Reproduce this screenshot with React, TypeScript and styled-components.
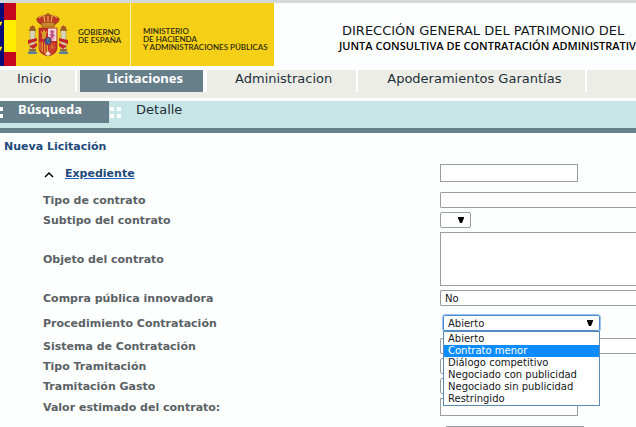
import React, { useState } from "react";
import styled, { createGlobalStyle, css } from "styled-components";

const GlobalStyle = createGlobalStyle`
  * { box-sizing: border-box; }
  body {
    margin: 0;
    background: #fdfefe;
    font-family: "DejaVu Sans", Verdana, sans-serif;
    color: #1f2f38;
    overflow-x: hidden;
  }
`;

const Header = styled.header`
  display: flex;
  align-items: stretch;
  height: 66px;
  border-top: 3px solid #d3d8da;
  margin-bottom: 4px;
`;

const Brand = styled.div`
  flex: none;
  display: flex;
  width: 274px;
  background: #f5d017;
  color: #2c2a10;
  font: 600 8px/8px Lato, sans-serif;
`;

const Government = styled.div`
  flex: none;
  display: flex;
  align-items: center;
  width: 131px;
  border-right: 1px solid #fdf4c0;
`;

const Flag = styled.svg`
  flex: none;
  width: 16px;
  height: 63px;
`;

const Crest = styled.svg`
  flex: none;
  width: 42px;
  height: 44px;
  margin: 0 9px 0 11px;
`;

const Ministry = styled.div`
  display: flex;
  align-items: center;
  padding: 8px 0 0 12px;
  white-space: nowrap;
`;

const GovernmentName = styled.span`
  padding-top: 2px;
  white-space: nowrap;
`;

const Heading = styled.div`
  padding: 19px 0 0 65px;
  color: #10171b;
  white-space: nowrap;
`;

const Department = styled.div`
  padding-left: 3px;
  font-size: 13px;
  line-height: 17px;
`;

const Board = styled.div`
  font: 600 11px/14px "Open Sans", Tahoma, sans-serif;
  color: #000;
`;

const MainNav = styled.nav`
  display: flex;
  align-items: flex-start;
  height: 28px;
  background: #ecede7;
  margin-bottom: 3px;
`;

const Tab = styled.a<{ $active?: boolean; $left: number; $right: number }>`
  height: 22px;
  padding: 0 ${(p) => p.$right}px 0 ${(p) => p.$left}px;
  font-size: 13px;
  line-height: 17px;
  color: #1f2f38;
  text-decoration: none;
  white-space: nowrap;
  ${(p) =>
    p.$active &&
    css`
      background: #667f8a;
      color: #fff;
      font-family: "Noto Sans", Tahoma, sans-serif;
      font-weight: bold;
    `}
`;

const Divider = styled.span<{ $wide?: boolean }>`
  width: ${(p) => (p.$wide ? 4 : 2)}px;
  height: 22px;
  background: #fff;
`;

const Gap = styled.span`
  width: 3px;
`;

const SubNav = styled.nav`
  display: flex;
  align-items: flex-start;
  height: 32px;
  background: #c7e5e4;
  border-bottom: 5px solid #667f8a;
`;

const Dots = styled.svg`
  flex: none;
  width: 12px;
  height: 22px;
`;

const ActiveGroup = styled.div`
  display: flex;
  background: #667f8a;
`;

const Title = styled.h1`
  margin: 6px 0 0 4px;
  font-size: 11px;
  line-height: 15px;
  color: #1d4a7a;
`;

const Form = styled.form`
  display: flex;
  flex-direction: column;
  gap: 4px;
  padding: 10px 0 0 43px;
`;

const Row = styled.div<{ $space?: "after" | "around" | "before" }>`
  display: grid;
  grid-template-columns: 397px minmax(150px, 1fr);
  align-items: center;
  margin-top: ${(p) => (p.$space === "around" ? 5 : p.$space === "before" ? 6 : 0)}px;
  margin-bottom: ${(p) => (p.$space === "after" ? 6 : p.$space === "around" ? 3 : 0)}px;
`;

const Label = styled.label`
  padding-top: 2px;
  font-size: 11px;
  line-height: 14px;
  font-weight: bold;
  color: #5a6265;
`;

const Section = styled.div`
  display: flex;
  align-items: center;
  gap: 11px;
`;

const Caret = styled.svg`
  width: 11px;
  height: 8px;
  margin-top: 2px;
`;

const SectionLink = styled.a`
  padding-top: 2px;
  font-size: 11px;
  line-height: 16px;
  font-weight: bold;
  color: #1d4a7a;
  text-decoration: underline;
  text-decoration-color: #1c5fc4;
`;

const TextBox = styled.input`
  width: 138px;
  height: 18px;
  border: 1px solid #979da1;
  background: #fff;
  padding: 0 4px;
  font: 10px "DejaVu Sans", sans-serif;
`;

const OffsetBox = styled(TextBox)`
  margin-left: 6px;
`;

const TextArea = styled.textarea`
  display: block;
  width: 100%;
  height: 54px;
  border: 1px solid #979da1;
  border-right: 0;
  background: #fff;
  resize: none;
  font: 10px "DejaVu Sans", sans-serif;
`;

const widths = { tiny: "31px", medium: "157px", wide: "100%" };

const SelectBox = styled.div<{ $size: keyof typeof widths }>`
  position: relative;
  display: grid;
  align-items: center;
  width: ${(p) => widths[p.$size]};
  & > * { grid-area: 1 / 1; }
`;

const Select = styled.select<{ $open?: boolean; $wide?: boolean }>`
  appearance: none;
  width: 100%;
  height: 16px;
  margin: 0;
  padding: 1px 4px 0;
  border: 1px solid ${(p) => (p.$open ? "#4d8bd0" : "#979da1")};
  border-radius: 2px;
  ${(p) =>
    p.$wide &&
    css`
      border-right: 0;
      border-radius: 2px 0 0 2px;
    `}
  outline: ${(p) => (p.$open ? "1px solid #9cc1ea" : "none")};
  background: #fff;
  color: #15171a;
  font: 10px/13px "DejaVu Sans", sans-serif;
`;

const Arrow = styled.svg`
  justify-self: end;
  width: 6px;
  height: 6px;
  margin-right: 7px;
  pointer-events: none;
`;

const OpenField = styled.div`
  padding-left: 3px;
`;

const Options = styled.ul`
  position: absolute;
  z-index: 1;
  top: 100%;
  left: 0;
  width: 100%;
  margin: 0;
  padding: 1px 0 0;
  border: 1px solid #5b8bb5;
  background: #fff;
  list-style: none;
`;

const Option = styled.li<{ $active: boolean }>`
  padding: 0 4px;
  font-size: 10px;
  line-height: 12px;
  white-space: nowrap;
  color: ${(p) => (p.$active ? "#fff" : "#15171a")};
  background: ${(p) => (p.$active ? "#0d8cff" : "transparent")};
`;

const procedures = [
  "Abierto",
  "Contrato menor",
  "Diálogo competitivo",
  "Negociado con publicidad",
  "Negociado sin publicidad",
  "Restringido",
];

function ArrowIcon() {
  return (
    <Arrow viewBox="0 0 6 6" aria-hidden="true">
      <path d="M0 0h6v1L4 6H2L0 1z" fill="#000" />
    </Arrow>
  );
}

function DropDown({ id, size, options = [] }: { id: string; size: keyof typeof widths; options?: string[] }) {
  return (
    <SelectBox $size={size}>
      <Select id={id} $wide={size === "wide"}>
        {options.map((o) => (
          <option key={o}>{o}</option>
        ))}
      </Select>
      {size !== "wide" && <ArrowIcon />}
    </SelectBox>
  );
}

function ProcedureField() {
  const [active, setActive] = useState(1);
  return (
    <OpenField>
      <SelectBox $size="medium">
        <Select id="procedimiento" $open>
          {procedures.map((o) => (
            <option key={o}>{o}</option>
          ))}
        </Select>
        <ArrowIcon />
        <Options role="listbox" aria-label="Procedimiento Contratación">
          {procedures.map((o, i) => (
            <Option key={o} role="option" aria-selected={i === active} $active={i === active} onMouseEnter={() => setActive(i)}>
              {o}
            </Option>
          ))}
        </Options>
      </SelectBox>
    </OpenField>
  );
}

function SpanishCrest() {
  return (
    <Crest viewBox="0 0 42 44" aria-hidden="true">
      <g stroke="#8d2018" strokeWidth="0.5">
        <path d="M15 12C9 9 8 5 13 3.500q4-2 8-1.500 4-.5 8 1.500c5 1.500 4 5.500-2 8.500z" fill="#bd3824" />
        <path d="M12 5q2-3 5-2l1 7M21 2v8M30 5q-2-3-5-2l-1 7" fill="none" stroke="#e9b54a" strokeWidth="1.200" />
        <path d="M14 10q7-2 14 0l-1 4H15z" fill="#c58a2c" />
      </g>
      <path d="M21 0v3M19.500 1.200h3" stroke="#7d4a18" />
      <g fill="#d9d4ba" stroke="#8c8360" strokeWidth="0.500">
        <path d="M3 17h5v21H3zM34 17h5v21h-5z" />
      </g>
      <path d="M3 13l1 1 1.500-2L7 14l1-1v4H3zM34 13l1 1 1.500-2 1.500 2 1-1v4h-5z" fill="#a85026" />
      <path d="M2 16h7v2H2zM33 16h7v2h-7zM2 36h7v2H2zM33 36h7v2h-7z" fill="#9c6d25" />
      <path d="M1 39q4-2 9 0v2H1zM32 39q4-2 9 0v2h-9z" fill="#5d8094" />
      <path d="M1 27l9-2v3l-9 3zM2 33l8-3v3l-4 3zM41 27l-9-2v3l9 3zM40 33l-8-3v3l4 3z" fill="#c5282b" />
      <path d="M12 15h18v20q0 6-9 8-9-2-9-8z" fill="#c7292c" stroke="#933020" strokeWidth="0.700" />
      <path d="M21 15.500h8.500V28H21z" fill="#efd7d9" />
      <path d="M23 18l2-1 3 2-2 1 2 3-2 1 1 3-2-2-2 1 1-3-2-1 2-1z" fill="#bd5383" />
      <path d="M14 20v-2h1v1h1v-2h2v2h1v-1h1v2l-1 1v5h-4v-5z" fill="#d49c2b" />
      <path d="M12.500 29H21v12q-8-2-8.500-6z" fill="#dba72d" />
      <path d="M14 29v9M16.500 29v11M19 29v12" stroke="#c62628" strokeWidth="1.200" />
      <path d="M22 30l6 7M28 30l-6 8M22 34h7M25 29v11" stroke="#d9882b" strokeWidth="0.700" />
      <path d="M18 41l3-3 3 3-3 2z" fill="#eee0c8" />
      <ellipse cx="21" cy="28" rx="3.500" ry="4" fill="#25549a" stroke="#b43232" />
      <path d="M20 26h2M20 28h1M22 28h1M21 30h1" stroke="#c8bd7a" strokeWidth="0.700" />
    </Crest>
  );
}

export default function App() {
  return (
    <>
      <GlobalStyle />
      <Header>
        <Brand>
          <Government>
            <Flag viewBox="0 0 16 63" aria-hidden="true">
              <path d="M0 0h4v63H0z" fill="#090b78" />
              <path d="M4 0h12v63H4z" fill="#c4061e" />
              <path d="M4 17h12v32H4z" fill="#ffee00" />
              <path d="M0 19l2-.5L2 20l-1 1 .5 2L0 22zM0 44l2-.5L2 45l-1 1 .5 2L0 47z" fill="#ffee00" />
            </Flag>
            <SpanishCrest />
            <GovernmentName>
              GOBIERNO
              <br />
              DE ESPAÑA
            </GovernmentName>
          </Government>
          <Ministry>
            <span>
              MINISTERIO
              <br />
              DE HACIENDA
              <br />Y ADMINISTRACIONES PÚBLICAS
            </span>
          </Ministry>
        </Brand>
        <Heading>
          <Department>DIRECCIÓN GENERAL DEL PATRIMONIO DEL</Department>
          <Board>JUNTA CONSULTIVA DE CONTRATACIÓN ADMINISTRATIVA</Board>
        </Heading>
      </Header>
      <MainNav>
        <Tab href="#inicio" $left={17} $right={24}>Inicio</Tab>
        <Divider />
        <Gap />
        <Tab href="#licitaciones" $left={26} $right={20} $active>Licitaciones</Tab>
        <Divider $wide />
        <Tab href="#administracion" $left={28} $right={24}>Administracion</Tab>
        <Divider />
        <Tab href="#apoderamientos" $left={29} $right={24}>Apoderamientos Garantías</Tab>
        <Divider />
      </MainNav>
      <SubNav>
        <ActiveGroup>
          <Dots viewBox="0 0 12 22" aria-hidden="true">
            <path d="M0 6h3v4H0zM0 13h3v4H0z" fill="#fff" />
          </Dots>
          <Tab href="#busqueda" $left={6} $right={27} $active>Búsqueda</Tab>
        </ActiveGroup>
        <Dots viewBox="0 0 12 22" aria-hidden="true">
          <path d="M1 6h4v4H1zM8 6h4v4H8zM1 13h4v4H1zM8 13h4v4H8z" fill="#fff" />
        </Dots>
        <Tab href="#detalle" $left={15} $right={24}>Detalle</Tab>
      </SubNav>
      <main>
        <Title>Nueva Licitación</Title>
        <Form>
          <Row $space="after">
            <Section>
              <Caret viewBox="0 0 11 8" aria-hidden="true">
                <path d="M2 7l4-4 4 4" fill="none" stroke="#000" strokeWidth="1.500" />
              </Caret>
              <SectionLink href="#expediente">Expediente</SectionLink>
            </Section>
            <TextBox id="expediente" aria-label="Expediente" />
          </Row>
          <Row>
            <Label htmlFor="tipo">Tipo de contrato</Label>
            <DropDown id="tipo" size="wide" />
          </Row>
          <Row>
            <Label htmlFor="subtipo">Subtipo del contrato</Label>
            <DropDown id="subtipo" size="tiny" />
          </Row>
          <Row>
            <Label htmlFor="objeto">Objeto del contrato</Label>
            <TextArea id="objeto" />
          </Row>
          <Row>
            <Label htmlFor="compra">Compra pública innovadora</Label>
            <DropDown id="compra" size="wide" options={["No"]} />
          </Row>
          <Row $space="around">
            <Label htmlFor="procedimiento">Procedimiento Contratación</Label>
            <ProcedureField />
          </Row>
          <Row>
            <Label htmlFor="sistema">Sistema de Contratación</Label>
            <DropDown id="sistema" size="wide" />
          </Row>
          <Row>
            <Label htmlFor="tramitacion">Tipo Tramitación</Label>
            <DropDown id="tramitacion" size="medium" />
          </Row>
          <Row>
            <Label htmlFor="gasto">Tramitación Gasto</Label>
            <DropDown id="gasto" size="medium" />
          </Row>
          <Row>
            <Label htmlFor="valor">Valor estimado del contrato:</Label>
            <TextBox id="valor" />
          </Row>
          <Row $space="before">
            <span />
            <OffsetBox aria-label="Importe" />
          </Row>
        </Form>
      </main>
    </>
  );
}
